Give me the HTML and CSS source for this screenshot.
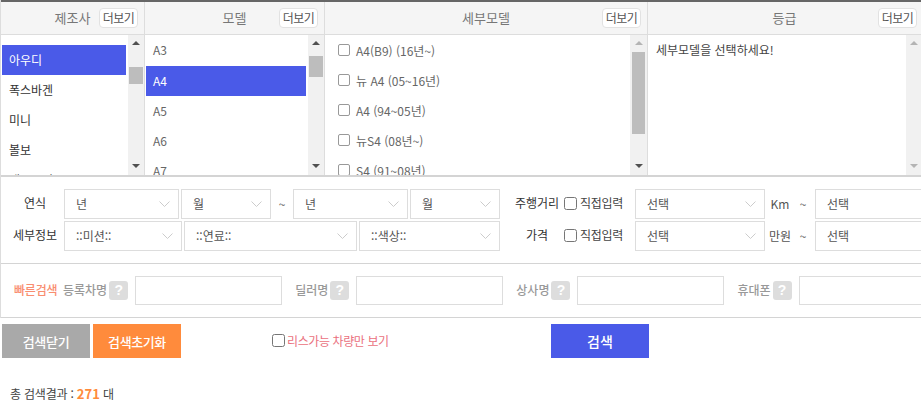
FILE: index.html
```html
<!DOCTYPE html>
<html lang="ko">
<head>
<meta charset="utf-8">
<title>차량 검색</title>
<link rel="stylesheet" href="styles.css">
</head>
<body>
<svg class="defs" width="0" height="0" aria-hidden="true"><symbol id="chev" viewBox="0 0 11 6"><path d="M.5.5 5.5 5.5 10.5.5" fill="none" stroke="#ccc"/></symbol></svg>
<div class="panel">
  <section class="picker">
    <div class="col col-maker">
      <header class="col-head"><span></span><h2>제조사</h2><button class="more">더보기</button></header>
      <div class="col-body">
        <ul class="list list-pad">
          <li class="on">아우디</li><li>폭스바겐</li><li>미니</li><li>볼보</li><li>랜드로버</li>
        </ul>
        <div class="sb"><i class="up"></i><div class="track"><b class="thumb t-maker"></b></div><i class="down"></i></div>
      </div>
    </div>
    <div class="col col-model">
      <header class="col-head"><span></span><h2>모델</h2><button class="more">더보기</button></header>
      <div class="col-body">
        <ul class="list soft">
          <li>A3</li><li class="on">A4</li><li>A5</li><li>A6</li><li>A7</li>
        </ul>
        <div class="sb"><i class="up"></i><div class="track"><b class="thumb t-model"></b></div><i class="down"></i></div>
      </div>
    </div>
    <div class="col col-sub">
      <header class="col-head"><span></span><h2>세부모델</h2><button class="more">더보기</button></header>
      <div class="col-body">
        <ul class="list soft checks">
          <li><input type="checkbox" class="lc"><span>A4(B9) (16년~)</span></li>
          <li><input type="checkbox" class="lc"><span>뉴 A4 (05~16년)</span></li>
          <li><input type="checkbox" class="lc"><span>A4 (94~05년)</span></li>
          <li><input type="checkbox" class="lc"><span>뉴S4 (08년~)</span></li>
          <li><input type="checkbox" class="lc"><span>S4 (91~08년)</span></li>
        </ul>
        <div class="sb sb-wide"><i class="up faint"></i><div class="track"><b class="thumb t-sub"></b></div><i class="down"></i></div>
      </div>
    </div>
    <div class="col col-grade">
      <header class="col-head"><span></span><h2>등급</h2><button class="more">더보기</button></header>
      <div class="col-body">
        <p class="hint">세부모델을 선택하세요!</p>
        <div class="sb sb-off"><i class="up faint"></i><div class="track"></div><i class="down faint"></i></div>
      </div>
    </div>
  </section>

  <section class="filters">
    <div class="row">
      <label class="lab">연식</label>
      <div class="sel w115"><span>년</span><svg><use href="#chev"/></svg></div>
      <div class="sel w90"><span>월</span><svg><use href="#chev"/></svg></div>
      <span class="tilde-y">~</span>
      <div class="sel w115"><span>년</span><svg><use href="#chev"/></svg></div>
      <div class="sel w90"><span>월</span><svg><use href="#chev"/></svg></div>
      <label class="lab2">주행거리</label>
      <input type="checkbox" class="cb"><span class="direct">직접입력</span>
      <div class="sel w130"><span>선택</span><svg><use href="#chev"/></svg></div>
      <span class="unit">Km</span><span class="tilde">~</span>
      <div class="sel wlast"><span>선택</span></div>
    </div>
    <div class="row">
      <label class="lab">세부정보</label>
      <div class="sel w118"><span>::미션::</span><svg><use href="#chev"/></svg></div>
      <div class="sel w173"><span>::연료::</span><svg><use href="#chev"/></svg></div>
      <div class="sel w141"><span>::색상::</span><svg><use href="#chev"/></svg></div>
      <label class="lab2">가격</label>
      <input type="checkbox" class="cb"><span class="direct">직접입력</span>
      <div class="sel w130"><span>선택</span><svg><use href="#chev"/></svg></div>
      <span class="unit">만원</span><span class="tilde">~</span>
      <div class="sel wlast"><span>선택</span></div>
    </div>
  </section>

  <section class="quick">
    <strong class="quick-title">빠른검색</strong>
    <div class="qf"><label>등록차명</label><span class="q">?</span><input type="text"></div>
    <div class="qf"><label>딜러명</label><span class="q">?</span><input type="text"></div>
    <div class="qf"><label>상사명</label><span class="q">?</span><input type="text"></div>
    <div class="qf"><label>휴대폰</label><span class="q">?</span><input type="text"></div>
  </section>
</div>

<section class="actions">
  <button class="btn btn-grey">검색닫기</button>
  <button class="btn btn-orange">검색초기화</button>
  <label class="lease"><input type="checkbox" class="cb">리스가능 차량만 보기</label>
  <button class="btn btn-blue">검색</button>
</section>

<p class="total">총 검색결과 : <b>271</b> 대</p>
</body>
</html>
```

FILE: styles.css
```css
* { box-sizing: border-box; }
html, body { margin: 0; padding: 0; overflow: hidden; }
body {
  width: 921px;
  height: 404px;
  background: #fff;
  color: #555;
  font: 12px/1.2 "Noto Sans CJK KR", "Noto Sans", sans-serif;
}
.defs { position: absolute; }
ul, h2, p { margin: 0; padding: 0; }
ul { list-style: none; }

.panel { border-left: 1px solid #ddd; width: 1000px; }

.picker {
  display: flex;
  height: 177px;
  border-top: 2px solid #666;
  border-bottom: 2px solid #d4d4d4;
}
.col { display: flex; flex-direction: column; border-right: 1px solid #ddd; height: 173px; flex: none; }
.col-maker { width: 144px; }
.col-model { width: 180px; }
.col-sub { width: 323px; }
.col-grade { width: 273px; border-right: 0; }

.col-head {
  display: grid;
  grid-template-columns: 1fr auto 1fr;
  align-items: center;
  height: 33px;
  padding: 0 6px 1px;
  background: #f5f5f5;
  border-bottom: 1px solid #ddd;
  flex: none;
}
.col-grade .col-head { padding: 0 4px 1px; }
.col-head h2 { font-size: 13px; font-weight: 400; color: #777; }
.more {
  justify-self: end;
  width: 39px;
  height: 20px;
  padding: 0;
  background: #fff;
  border: 1px solid #e2e2e2;
  border-radius: 4px;
  font: 12px/1 "Noto Sans CJK KR", sans-serif;
  letter-spacing: -.6px;
  color: #555;
}

.col-body { display: flex; height: 140px; overflow: hidden; }
.list { flex: 1; min-width: 0; padding: 0 1px; color: #333; }
.list-pad { padding-top: 10px; }
.list li { height: 30px; line-height: 30px; padding-left: 7px; white-space: nowrap; margin-right: 1px; }
.list li.on { background: #4a5ae8; color: #fff; }
.soft { color: #666; }
.soft li:first-child { height: 31px; }
.checks li { display: flex; align-items: center; padding-left: 12px; }
.checks li:first-child { height: 30px; }
.checks span { position: relative; top: 1px; }
.lc {
  appearance: none;
  width: 12px;
  height: 12px;
  margin: 0 6px 0 0;
  border: 1px solid #999;
  border-radius: 2px;
  background: #fff;
  flex: none;
}

.hint { flex: 1; padding: 8px 8px; color: #444; }

.sb {
  flex: none;
  width: 16px;
  display: flex;
  flex-direction: column;
  background: #f1f1f1;
}
.sb-wide { width: 17px; }
.sb-off { width: 15px; }
.sb i { display: block; height: 17px; flex: none; position: relative; }
.sb i::after {
  content: "";
  position: absolute;
  left: 50%;
  top: 6px;
  margin-left: -4px;
  border: 4px solid transparent;
  border-top: 0;
  border-bottom: 4px solid #505050;
}
.sb i.down::after { border-bottom: 0; border-top: 4px solid #505050; }
.sb i.faint::after { border-bottom-color: #b4b4b4; }
.sb i.down.faint::after { border-top-color: #b4b4b4; }
.track { flex: 1; padding: 0 1px; }
.sb-wide .track { padding: 0 2px; }
.thumb { display: block; background: #bdbdbd; }
.t-maker { height: 17px; margin-top: 15px; }
.t-model { height: 21px; margin-top: 4px; }
.t-sub { height: 82px; }

.filters {
  padding: 12px 0 12px;
  border-bottom: 1px solid #d4d4d4;
  display: flex;
  flex-direction: column;
  gap: 2px;
}
.row { display: flex; align-items: center; height: 30px; gap: 2px; }
.lab { width: 44px; margin: 0 5px 2px 12px; text-align: center; color: #333; white-space: nowrap; }
.lab2 { width: 50px; margin: 0 0 2px 10px; text-align: center; color: #333; white-space: nowrap; flex: none; }
.sel {
  display: flex;
  align-items: center;
  justify-content: space-between;
  height: 30px;
  padding: 0 8px 0 11px;
  background: #fff;
  border: 1px solid #ddd;
  flex: none;
  color: #555;
}
.sel svg { width: 11px; height: 6px; flex: none; }
.w115 { width: 115px; }
.w90 { width: 90px; }
.w118 { width: 118px; }
.w173 { width: 173px; }
.w141 { width: 141px; }
.w130 { width: 130px; }
.wlast { width: 130px; }
.tilde-y { width: 18px; text-align: center; flex: none; color: #666; }
.cb { width: 13px; height: 13px; margin: 0 0 2px; flex: none; }
.direct { width: 43px; margin: 0 10px 2px 1px; white-space: nowrap; letter-spacing: -.25px; color: #444; flex: none; }
.unit { width: 26px; text-align: center; flex: none; white-space: nowrap; color: #555; }
.tilde { width: 16px; margin-right: 2px; text-align: center; flex: none; color: #666; }

.quick {
  display: flex;
  align-items: center;
  height: 54px;
  padding: 0 0 0 13px;
  border-bottom: 1px solid #d4d4d4;
  gap: 13px;
}
.quick-title { width: 44px; margin-right: -8px; font-weight: 500; color: #f98d70; white-space: nowrap; letter-spacing: -.2px; }
.qf { display: flex; align-items: center; flex: none; }
.qf label { font-weight: 500; color: #999; white-space: nowrap; }
.q {
  width: 19px;
  height: 19px;
  margin: 0 7px 0 2px;
  background: #ddd;
  border-radius: 3px;
  color: #fff;
  font: 700 14px/19px "Liberation Sans", sans-serif;
  text-align: center;
}
.qf input { width: 147px; height: 29px; padding: 0 6px; border: 1px solid #ddd; background: #fff; }

.actions { display: flex; align-items: center; height: 34px; margin-top: 6px; padding-left: 2px; }
.btn {
  height: 34px;
  padding: 0;
  border: 0;
  color: #fff;
  font: 500 13px/1 "Noto Sans CJK KR", sans-serif;
  flex: none;
}
.btn-grey { width: 88px; background: #a9a9a9; letter-spacing: -.3px; }
.btn-orange { width: 88px; margin-left: 3px; background: #ff8b3c; letter-spacing: -.4px; }
.btn-blue { width: 98px; margin-left: 162px; background: #4a5ae8; font-size: 14px; }
.lease { display: flex; align-items: center; width: 117px; margin-left: 91px; color: #ea7180; white-space: nowrap; letter-spacing: -.4px; }
.lease .cb { margin: 0 2px 0 0; }

.total { margin-top: 28px; padding-left: 10px; color: #444; letter-spacing: -.2px; }
.total b { color: #ff8b3c; font-weight: 700; font-size: 13px; letter-spacing: 0; }
```
